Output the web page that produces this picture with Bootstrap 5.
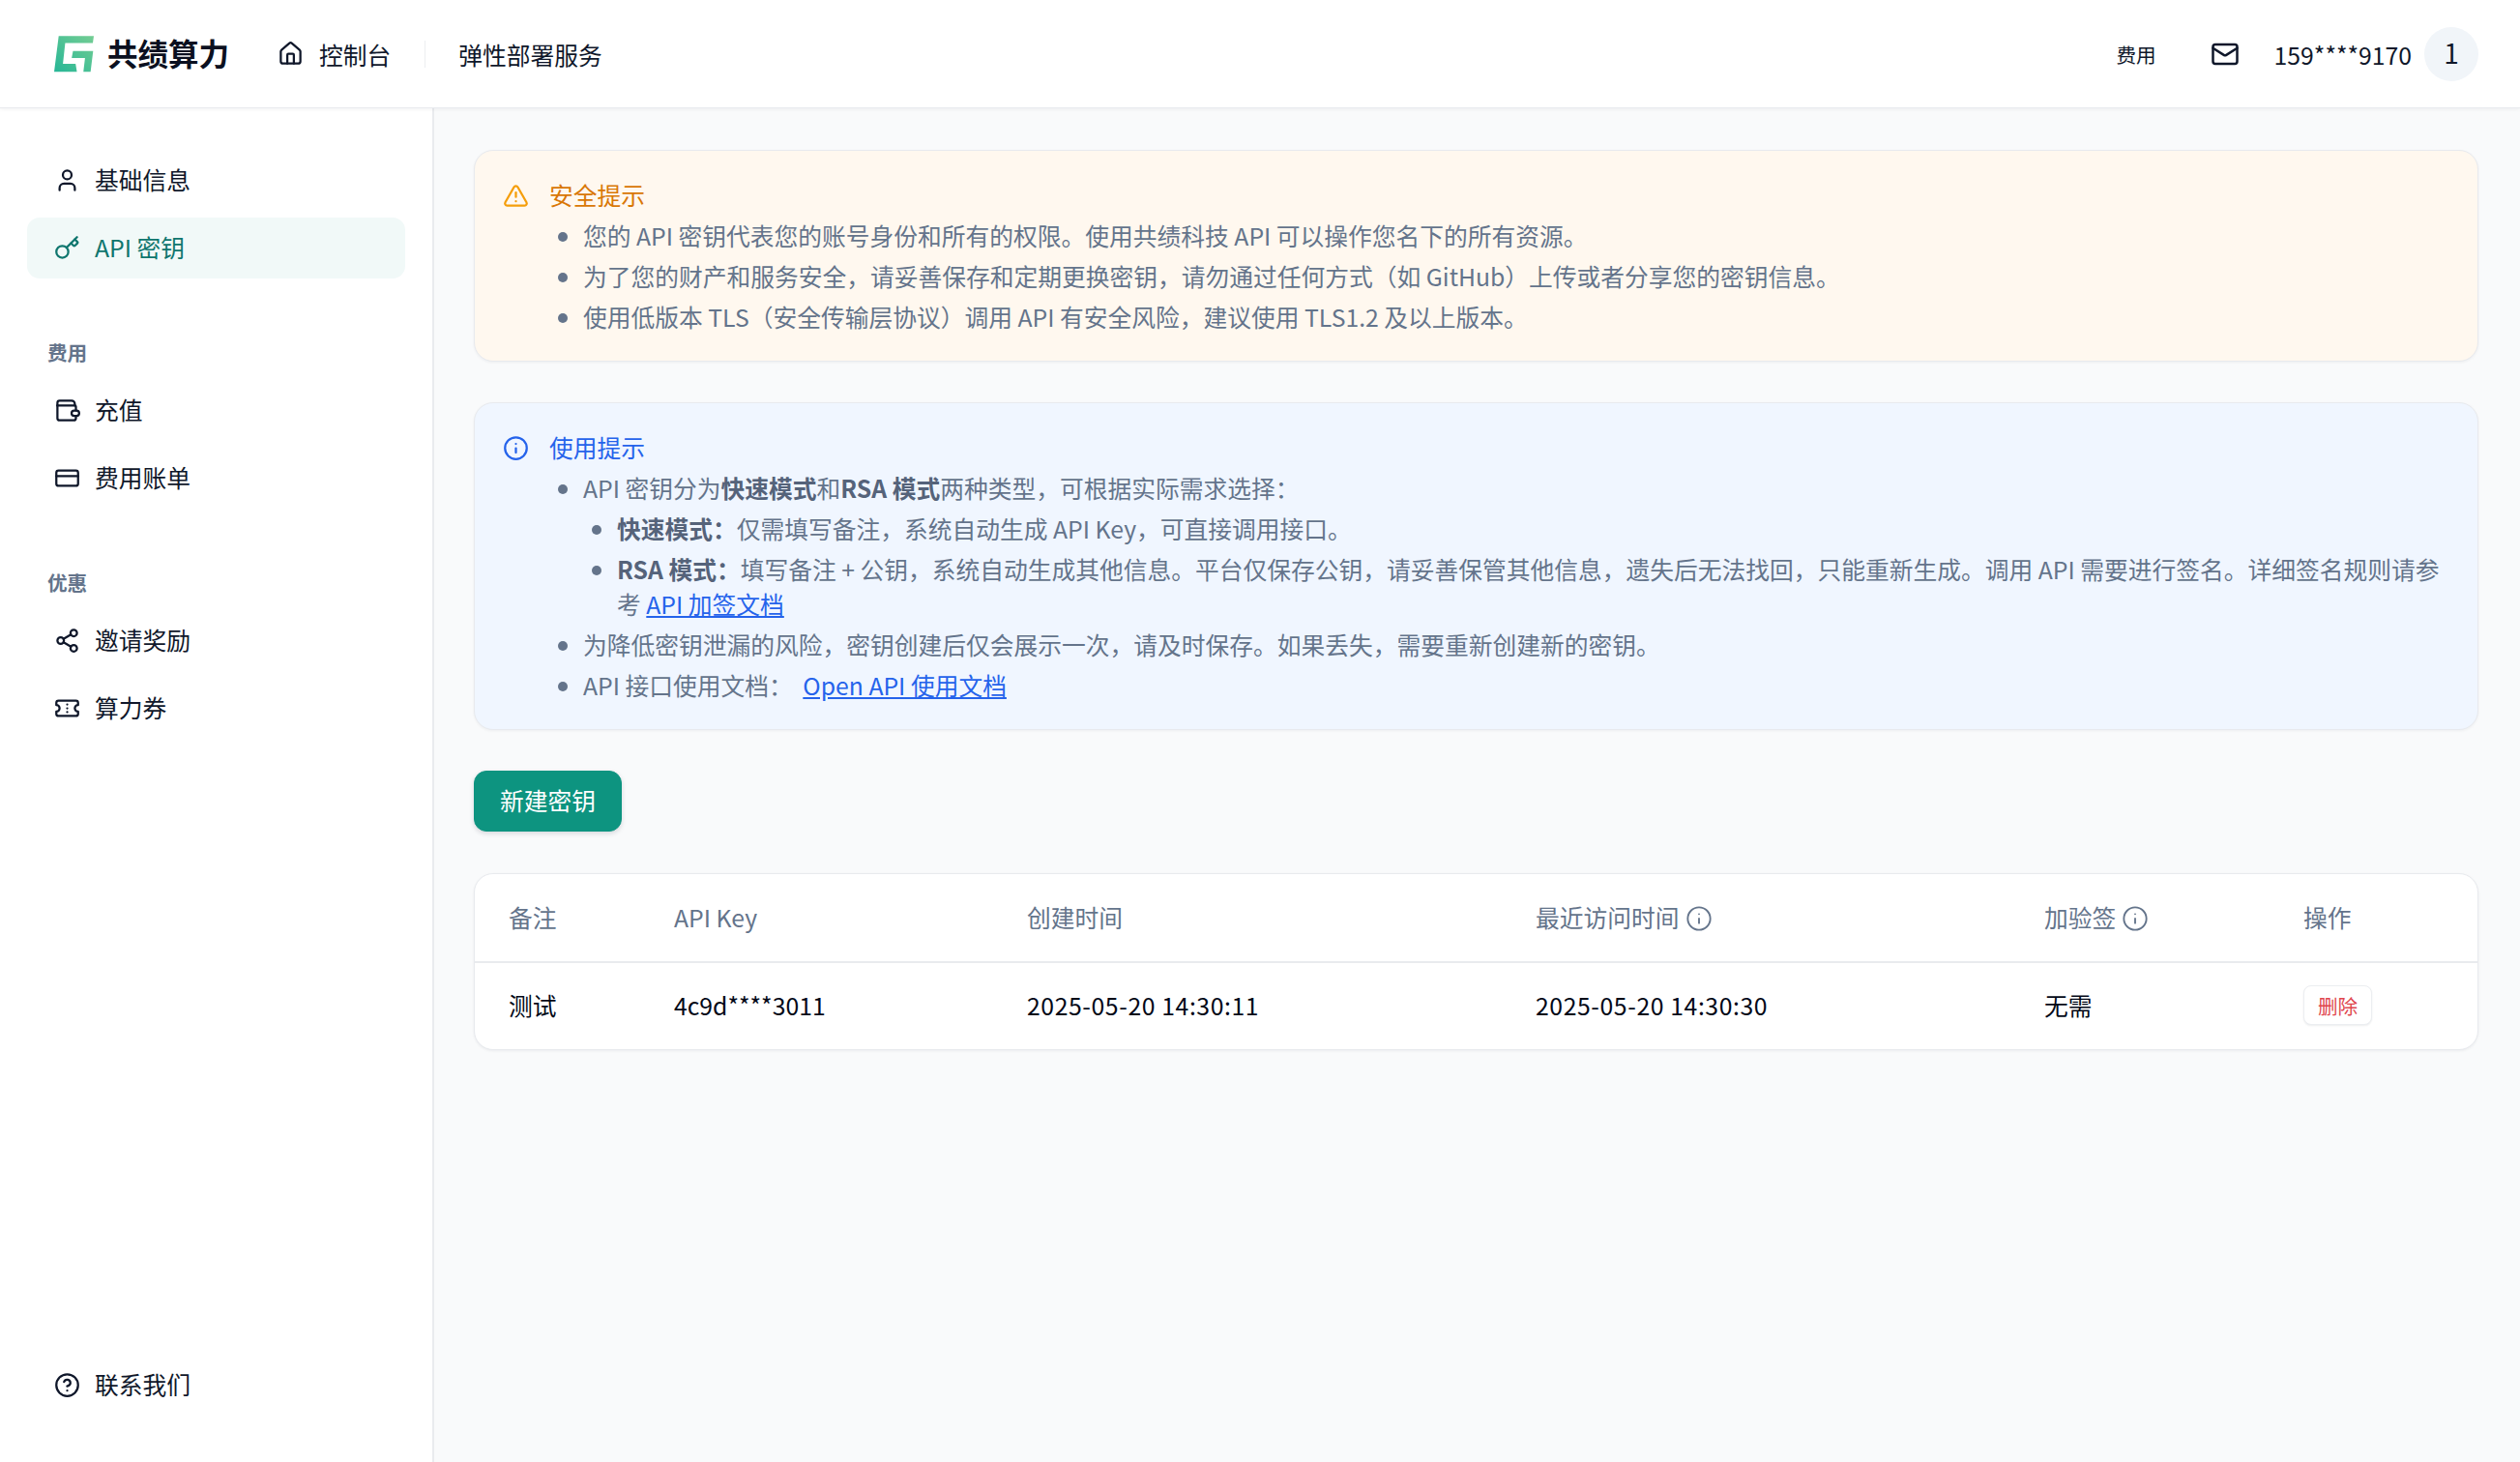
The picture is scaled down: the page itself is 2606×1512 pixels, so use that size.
<!DOCTYPE html>
<html lang="zh-CN">
<head>
<meta charset="utf-8">
<title>API 密钥</title>
<link href="https://cdn.jsdelivr.net/npm/bootstrap@5.3.0/dist/css/bootstrap.min.css" rel="stylesheet">
<style>
html,body{height:100%}
body{font-family:"Noto Sans CJK SC","Noto Sans",sans-serif;font-size:24.75px;line-height:36px;color:#020817;background:#f9fafb;overflow:hidden}
.ic{fill:none;stroke:currentColor;stroke-width:2;stroke-linecap:round;stroke-linejoin:round;flex:none}
.topbar{height:112px;background:#fff;border-bottom:1px solid #e8eaee;box-shadow:0 1px 4px rgba(15,23,42,.06);padding:0 43px 0 56px;position:relative;z-index:2}
.logo-mark{width:41px;height:38px;margin-right:14px}
.logo-name{font-size:31.5px;font-weight:700;line-height:40px;color:#0b1020;padding-bottom:3px}
.topnav{color:#0f172a}
.nav-left{margin-left:50px}
.topnav .ic{width:27px;height:27px}
.top-mail.ic{width:30px;height:30px}
.top-sep{width:1px;height:28px;background:#eceef1;margin:0 34px 0 35px}
.top-fee{font-size:20.6px;margin-right:56px}
.top-user{margin:0 13px 0 36px}
.avatar-c{width:56px;height:56px;border-radius:50%;background:#f1f5f9;font-size:28px;padding-bottom:3px}
.side{width:449px;background:#fff;border-right:2px solid #e9ebee;padding:43px 28px 48px 28px;flex:none}
.side-i{height:63px;padding:0 0 3px 28px;gap:15px;border-radius:13px;color:#0f172a;margin-bottom:7px;text-decoration:none}
.side-i .ic{width:27px;height:27px;margin-top:3px}
.side-i.on{background:#f1f9f8;color:#0f766e}
.side-t{font-size:20.6px;font-weight:700;color:#64748b;line-height:30px;margin:61px 0 14px 21px}
.content{padding:43px 43px 0 41px;min-width:0}
.note{border:1px solid #e8eaee;border-radius:20px;padding:24px 26px 28px 29px;margin-bottom:42px;box-shadow:0 1px 3px rgba(15,23,42,.05);color:#64748b}
.note-warn{background:#fff8ef}
.note-info{background:#f0f6ff}
.note-head{height:42px;gap:21px;margin-bottom:3px}
.note-head .ic{width:27px;height:27px;margin-top:3px}
.note-warn .note-head{color:#d97706}
.note-warn .note-head .ic{color:#f59e0b}
.note-info .note-head{color:#2563eb}
.note ul{margin:0;padding-left:83px;list-style:disc}
.note li{margin-bottom:6px}
.note li:last-child{margin-bottom:0}
.note ul ul{padding-left:35px;margin-top:6px}
.note a{color:#2563eb}
.doc-link{margin-left:5px}
.note b{font-weight:700;color:#55637a}
.new-btn{background:#0d9480;border-color:#0d9480;color:#fff;font-size:24.75px;line-height:36px;height:63px;width:153px;padding:0 0 3px;border-radius:13px;box-shadow:0 2px 5px rgba(15,23,42,.15);margin-bottom:43px}
.new-btn:hover{background:#0d9480;border-color:#0d9480;color:#fff}
.tbl-card{background:#fff;border:1px solid #e8eaee;border-radius:20px;box-shadow:0 1px 3px rgba(15,23,42,.06);overflow:hidden}
.tbl-card .table{margin:0;table-layout:fixed;--bs-table-bg:transparent}
.tbl-card th,.tbl-card td{padding:0 0 3px 35px;vertical-align:middle;border:0;font-size:24.75px;line-height:36px;font-weight:400}
.tbl-card thead th{height:91px;color:#64748b;border-bottom:2px solid #e9ebee}
.tbl-card tbody td{height:90px;color:#020817}
.tbl-card td.when{letter-spacing:.6px}
.th-i{width:28px;height:28px;margin-left:6px;vertical-align:-5px;stroke-width:1.6}
.c1{width:171px}.c2{width:365px}.c3{width:526px}.c4{width:526px}.c5{width:268px}
.del-btn{background:#fff;border:1px solid #eceef1;color:#e0464e;font-size:20.6px;line-height:30px;height:41px;width:71px;padding:0;border-radius:8px;box-shadow:0 1px 2px rgba(15,23,42,.08)}
</style>
</head>
<body class="d-flex flex-column">
<header class="topbar d-flex align-items-center flex-none">
  <svg class="logo-mark" viewBox="18 16 122 112"><defs><linearGradient id="lg" x1="0" y1="1" x2="1" y2="0"><stop offset="0" stop-color="#26b696"/><stop offset="1" stop-color="#74cd93"/></linearGradient></defs><path fill="url(#lg)" d="M32 16H140L137 38H52L45 102H84L88 126H18ZM76 62H138L130 126H108L113 84H72Z"/></svg>
  <span class="logo-name">共绩算力</span>
  <nav class="topnav nav-left d-flex align-items-center">
    <svg class="ic" viewBox="0 0 24 24"><path d="M15 21v-8a1 1 0 0 0-1-1h-4a1 1 0 0 0-1 1v8"/><path d="M3 10a2 2 0 0 1 .709-1.528l7-5.999a2 2 0 0 1 2.582 0l7 5.999A2 2 0 0 1 21 10v9a2 2 0 0 1-2 2H5a2 2 0 0 1-2-2z"/></svg>
    <span class="ms-3">控制台</span>
    <span class="top-sep"></span>
    <span>弹性部署服务</span>
  </nav>
  <div class="topnav d-flex align-items-center ms-auto">
    <span class="top-fee">费用</span>
    <svg class="ic top-mail" viewBox="0 0 24 24"><rect x="2" y="4" width="20" height="16" rx="2"/><path d="m22 7-8.97 5.7a1.94 1.94 0 0 1-2.06 0L2 7"/></svg>
    <span class="top-user">159****9170</span>
    <span class="avatar-c d-flex align-items-center justify-content-center">1</span>
  </div>
</header>
<div class="d-flex flex-grow-1" style="min-height:0">
  <aside class="side d-flex flex-column justify-content-between">
    <div>
      <a class="side-i d-flex align-items-center"><svg class="ic" viewBox="0 0 24 24"><path d="M19 21v-2a4 4 0 0 0-4-4H9a4 4 0 0 0-4 4v2"/><circle cx="12" cy="7" r="4"/></svg>基础信息</a>
      <a class="side-i on d-flex align-items-center"><svg class="ic" viewBox="0 0 24 24"><path d="m15.5 7.5 2.3 2.3a1 1 0 0 0 1.4 0l2.1-2.1a1 1 0 0 0 0-1.4L19 4"/><path d="m21 2-9.6 9.6"/><circle cx="7.5" cy="15.5" r="5.5"/></svg>API 密钥</a>
      <div class="side-t">费用</div>
      <a class="side-i d-flex align-items-center"><svg class="ic" viewBox="0 0 24 24"><path d="M3 7.5V5a2 2 0 0 1 2-2h11a3 3 0 0 1 3 3v1.5"/><path d="M3 7.5h16a1 1 0 0 1 1 1V12"/><path d="M3 7.5V19a2 2 0 0 0 2 2h13a2 2 0 0 0 2-2v-2"/><rect x="16" y="12" width="7" height="5" rx="2.5"/></svg>充值</a>
      <a class="side-i d-flex align-items-center"><svg class="ic" viewBox="0 0 24 24"><rect x="2" y="5" width="20" height="14" rx="2"/><path d="M2 10h20"/></svg>费用账单</a>
      <div class="side-t">优惠</div>
      <a class="side-i d-flex align-items-center"><svg class="ic" viewBox="0 0 24 24"><circle cx="18" cy="5" r="3"/><circle cx="6" cy="12" r="3"/><circle cx="18" cy="19" r="3"/><path d="m8.59 13.51 6.83 3.98M15.41 6.51l-6.82 3.98"/></svg>邀请奖励</a>
      <a class="side-i d-flex align-items-center"><svg class="ic" viewBox="0 0 24 24"><path d="M2 9a3 3 0 0 1 0 6v2a2 2 0 0 0 2 2h16a2 2 0 0 0 2-2v-2a3 3 0 0 1 0-6V7a2 2 0 0 0-2-2H4a2 2 0 0 0-2 2Z"/><path d="M12 8.5h.01M12 12h.01M12 15.5h.01"/></svg>算力券</a>
    </div>
    <a class="side-i d-flex align-items-center mb-0"><svg class="ic" viewBox="0 0 24 24"><circle cx="12" cy="12" r="10"/><path d="M9.09 9a3 3 0 0 1 5.83 1c0 2-3 3-3 3"/><path d="M12 17h.01"/></svg>联系我们</a>
  </aside>
  <main class="content flex-grow-1">
    <section class="note note-warn">
      <div class="note-head d-flex align-items-center"><svg class="ic" viewBox="0 0 24 24"><path d="m21.73 18-8-14a2 2 0 0 0-3.48 0l-8 14A2 2 0 0 0 4 21h16a2 2 0 0 0 1.73-3"/><path d="M12 9v4"/><path d="M12 17h.01"/></svg>安全提示</div>
      <ul>
        <li>您的 API 密钥代表您的账号身份和所有的权限。使用共绩科技 API 可以操作您名下的所有资源。</li>
        <li>为了您的财产和服务安全，请妥善保存和定期更换密钥，请勿通过任何方式（如 GitHub）上传或者分享您的密钥信息。</li>
        <li>使用低版本 TLS（安全传输层协议）调用 API 有安全风险，建议使用 TLS1.2 及以上版本。</li>
      </ul>
    </section>
    <section class="note note-info">
      <div class="note-head d-flex align-items-center"><svg class="ic" viewBox="0 0 24 24"><circle cx="12" cy="12" r="10"/><path d="M12 16v-4"/><path d="M12 8h.01"/></svg>使用提示</div>
      <ul>
        <li>API 密钥分为<b>快速模式</b>和<b>RSA 模式</b>两种类型，可根据实际需求选择：
          <ul>
            <li><b>快速模式：</b>仅需填写备注，系统自动生成 API Key，可直接调用接口。</li>
            <li><b>RSA 模式：</b>填写备注 + 公钥，系统自动生成其他信息。平台仅保存公钥，请妥善保管其他信息，遗失后无法找回，只能重新生成。调用 API 需要进行签名。详细签名规则请参考 <a href="#">API 加签文档</a></li>
          </ul>
        </li>
        <li>为降低密钥泄漏的风险，密钥创建后仅会展示一次，请及时保存。如果丢失，需要重新创建新的密钥。</li>
        <li>API 接口使用文档： <a href="#" class="doc-link">Open API 使用文档</a></li>
      </ul>
    </section>
    <button class="btn new-btn d-block" type="button">新建密钥</button>
    <div class="tbl-card">
      <table class="table">
        <colgroup><col class="c1"><col class="c2"><col class="c3"><col class="c4"><col class="c5"><col></colgroup>
        <thead><tr>
          <th>备注</th><th>API Key</th><th>创建时间</th>
          <th>最近访问时间<svg class="ic th-i" viewBox="0 0 24 24"><circle cx="12" cy="12" r="10"/><path d="M12 16v-4"/><path d="M12 8h.01"/></svg></th>
          <th>加验签<svg class="ic th-i" viewBox="0 0 24 24"><circle cx="12" cy="12" r="10"/><path d="M12 16v-4"/><path d="M12 8h.01"/></svg></th>
          <th>操作</th>
        </tr></thead>
        <tbody><tr>
          <td>测试</td><td>4c9d****3011</td><td class="when">2025-05-20 14:30:11</td><td class="when">2025-05-20 14:30:30</td><td>无需</td>
          <td><button class="btn del-btn" type="button">删除</button></td>
        </tr></tbody>
      </table>
    </div>
  </main>
</div>
<script src="https://cdn.jsdelivr.net/npm/bootstrap@5.3.0/dist/js/bootstrap.bundle.min.js"></script>
</body>
</html>
